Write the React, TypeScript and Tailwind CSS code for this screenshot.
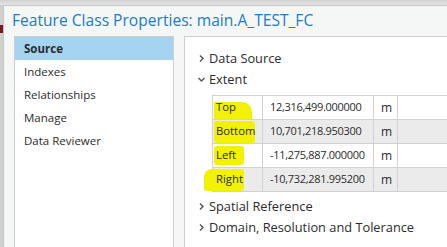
import type { ReactNode } from "react";

const NAV = ["Source", "Indexes", "Relationships", "Manage", "Data Reviewer"];

const EXTENT = [
  { label: "Top", value: "12,316,499.000000", mark: "left-[1px] top-[6px] w-[38px] h-[17px] rounded-tr-[10px]" },
  { label: "Bottom", value: "10,701,218.950300", mark: "left-[1px] top-[1px] w-[41px] h-[22px] rounded-[3px]" },
  { label: "Left", value: "-11,275,887.000000", mark: "left-[1px] top-[2px] w-[30px] h-[19px] rounded-[3px]" },
  { label: "Right", value: "-10,732,281.995200", mark: "left-[-9px] top-[1px] w-[40px] h-[22px] rounded-tl-[8px] rounded-[3px]" },
];

function Chevron({ open }: { open?: boolean }) {
  return (
    <svg width="9" height="9" viewBox="0 0 9 9" className="shrink-0">
      {open ? (
        <polyline points="1.5,3 4.5,6 7.5,3" fill="none" stroke="#5a5a5a" strokeWidth="1.5" />
      ) : (
        <polyline points="3,1.5 6,4.5 3,7.5" fill="none" stroke="#5a5a5a" strokeWidth="1.5" />
      )}
    </svg>
  );
}

function Section({ title, open, children }: { title: string; open?: boolean; children?: ReactNode }) {
  return (
    <div>
      <div className="flex items-center gap-[3px] h-[21px] pl-[12px]">
        <Chevron open={open} />
        <span>{title}</span>
      </div>
      {children}
    </div>
  );
}

export default function App() {
  return (
    <div
      className="w-[447px] h-[247px] overflow-hidden flex flex-col bg-[#d9d9d9] text-[#2b2b2b]"
      style={{ fontFamily: '"Open Sans", "Noto Sans", sans-serif' }}
    >
      {/* window chrome above */}
      <div className="h-[5px] shrink-0 bg-gradient-to-b from-[#d2d2d2] to-[#e4e4e4]" />
      <div className="flex flex-1 min-h-0">
        <div className="w-[3px] shrink-0 bg-[#cfcfcf] flex flex-col">
          <div className="h-[20px]" />
          <div className="h-[8px] bg-[#7a1b1b]" />
        </div>
        <div className="flex-1 flex flex-col border-l border-t border-[#c4c4c4] bg-[#f5f7f7]">
          {/* title */}
          <div className="h-[30px] shrink-0 pl-[8px] pt-[3px] text-[15.6px] leading-[22px] text-[#1d7bc4]">
            Feature Class Properties: main.A_TEST_FC
          </div>
          {/* body */}
          <div className="flex flex-1 min-h-0 pl-[10px] gap-[10px]">
            {/* nav */}
            <div className="w-[160px] shrink-0 bg-white border-l border-t border-r border-[#cfcfcf] text-[11.5px]">
              {NAV.map((n, i) => (
                <div
                  key={n}
                  className={
                    "h-[23px] flex items-center pl-[9px] " +
                    (i === 0 ? "bg-[#a5d4f1] font-bold" : "")
                  }
                >
                  {n}
                </div>
              ))}
            </div>
            {/* content */}
            <div className="flex-1 min-w-0 bg-white border-l border-t border-[#cfcfcf] text-[12.8px] pt-[11px]">
              <Section title="Data Source" />
              <Section title="Extent" open>
                <table className="table-fixed ml-[27px] mt-[5px] mb-[4px] border-collapse w-[260px]">
                  <colgroup>
                    <col className="w-[50px]" />
                    <col className="w-[111px]" />
                    <col className="w-[24px]" />
                    <col />
                  </colgroup>
                  <tbody>
                    {EXTENT.map((r, i) => (
                      <tr key={r.label} className={"h-[24px] " + (i % 2 ? "bg-[#ebebeb]" : "bg-white")}>
                        <td className="relative border border-[#d2d2d2] pl-[3px] text-[11.3px] whitespace-nowrap">
                          <span className={"absolute bg-[#f2f200] " + r.mark} />
                          <span className="relative">{r.label}</span>
                        </td>
                        <td className="border border-[#d2d2d2] pl-[7px] text-[11px] tracking-[-0.3px] whitespace-nowrap">
                          {r.value}
                        </td>
                        <td className="border border-[#d2d2d2] pl-[7px] text-[12px]">m</td>
                        <td className="border border-[#d2d2d2] border-r-0" />
                      </tr>
                    ))}
                  </tbody>
                </table>
              </Section>
              <Section title="Spatial Reference" />
              <Section title="Domain, Resolution and Tolerance" />
            </div>
          </div>
        </div>
      </div>
    </div>
  );
}
